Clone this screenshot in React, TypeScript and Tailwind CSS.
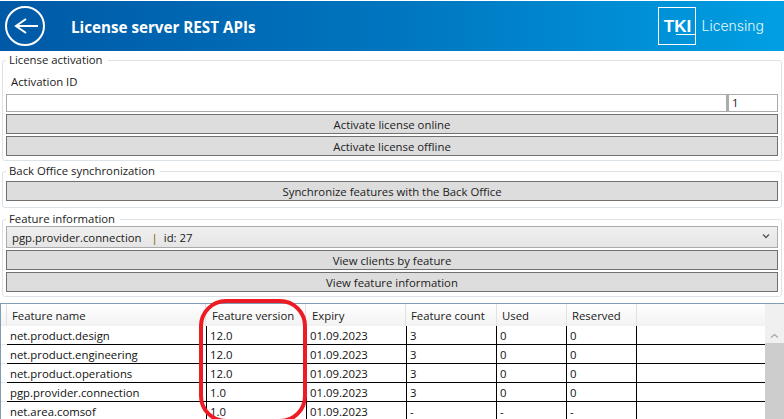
import React from "react";

const rows = [
  ["net.product.design", "12.0", "01.09.2023", "3", "0", "0"],
  ["net.product.engineering", "12.0", "01.09.2023", "3", "0", "0"],
  ["net.product.operations", "12.0", "01.09.2023", "3", "0", "0"],
  ["pgp.provider.connection", "1.0", "01.09.2023", "3", "0", "0"],
  ["net.area.comsof", "1.0", "01.09.2023", "-", "-", "-"],
];

const heads = [
  ["Feature name", "w-[199px] pl-[5px]"],
  ["Feature version", "w-[100px] pl-[6px]"],
  ["Expiry", "w-[100px] pl-[6px]"],
  ["Feature count", "w-[91px] pl-[5px]"],
  ["Used", "w-[70px] pl-[5px]"],
  ["Reserved", "w-[70px] pl-[5px]"],
];
const cellWidths = ["w-[199px]", "w-[100px]", "w-[100px]", "w-[90px]", "w-[70px]", "w-[70px]"];

function Btn({ children }: { children: React.ReactNode }) {
  return (
    <div className="h-5 border border-[#707070] bg-[#dddddd] flex items-center justify-center pt-[2px] text-[11.35px] leading-[14px] text-[#222]">
      {children}
    </div>
  );
}

function Group({ title, children, cls }: { title: string; children: React.ReactNode; cls: string }) {
  return (
    <fieldset className={`mx-[2px] border border-[#dce3e8] rounded-[3px] px-[3px] ${cls}`}>
      <legend className="ml-0 pl-[3px] pr-[5px] h-[14px] text-[11.35px] leading-[13px] text-[#222]">{title}</legend>
      {children}
    </fieldset>
  );
}

export default function App() {
  return (
    <div className="relative w-[784px] h-[419px] overflow-hidden bg-white text-[#1a1a1a] font-['Open_Sans','Noto_Sans',sans-serif]">
      <div className="h-[50px] mt-px flex items-center bg-gradient-to-r from-[#0059a6] via-[#0075bf] to-[#009fe3]">
        <svg width="42" height="42" viewBox="0 0 42 42" className="ml-[4px] shrink-0" fill="none" stroke="white">
          <circle cx="21" cy="21" r="19" strokeWidth="2" />
          <path d="M34 21H12M22 14l-10 7 10 7" strokeWidth="2" />
        </svg>
        <div className="ml-[25px] mt-[3px] text-[15.2px] font-bold text-white leading-none">License server REST APIs</div>
        <div className="ml-auto mr-[20px] flex items-center">
          <div className="relative w-[38px] h-[38px] border border-white flex items-center justify-center">
            <span className="text-[17px] font-bold text-white leading-none font-['Liberation_Sans',sans-serif]">TKI</span>
            <div className="absolute left-[17px] right-0 bottom-[9px] h-px bg-white" />
          </div>
          <div className="ml-[5px] text-[14px] text-[#e8f7fd] font-['Inter',sans-serif] font-light leading-none">Licensing</div>
        </div>
      </div>

      <Group title="License activation" cls="mt-[2px] h-[108px]">
        <div className="ml-[5px] mt-[6px] h-[17px] text-[11.35px] leading-[17px]">Activation ID</div>
        <div className="mt-[4px] flex h-[18px]">
          <div className="flex-1 border border-[#ababab] bg-white" />
          <div className="w-[51px] border border-[#ababab] border-l-[2px] bg-white text-[11.35px] leading-[16px] pl-[3px]">1</div>
        </div>
        <div className="mt-[2px] flex flex-col gap-[2px]">
          <Btn>Activate license online</Btn>
          <Btn>Activate license offline</Btn>
        </div>
      </Group>

      <Group title="Back Office synchronization" cls="mt-[3px] h-[44px]">
        <div className="mt-[3px]">
          <Btn>Synchronize features with the Back Office</Btn>
        </div>
      </Group>

      <Group title="Feature information" cls="mt-[4px] h-[85px]">
        <div className="h-[22px] border border-[#ababab] bg-gradient-to-b from-[#f0f0f0] to-[#e5e5e5] flex items-center pl-[5px] pr-[7px] pt-[2px] text-[11.35px] leading-[14px]">
          <span>pgp.provider.connection</span>
          <span className="ml-[10px] text-[#7a5a00]">|</span>
          <span className="ml-[6px]">id: 27</span>
          <svg width="8" height="6" viewBox="0 0 8 6" className="ml-auto -mt-[4px]" fill="none" stroke="#555" strokeWidth="1.3">
            <path d="M1 1.5l3 3 3-3" />
          </svg>
        </div>
        <div className="mt-[2px] flex flex-col gap-[2px]">
          <Btn>View clients by feature</Btn>
          <Btn>View feature information</Btn>
        </div>
      </Group>

      <div className="mt-[6px] border-t border-l border-[#7f9db9] bg-white">
        <div className="flex h-[22px] bg-gradient-to-b from-white to-[#f2f2f2]">
          <div className="w-[6px] border-r border-[#e2e2e2]" />
          {heads.map(([t, c]) => (
            <div key={t} className={`${c} border-r border-[#e2e2e2] text-[11.35px] leading-[23px]`}>{t}</div>
          ))}
        </div>
        <div className="relative">
          {rows.map((r) => (
            <div key={r[0]} className="flex h-[19px]">
              <div className="w-[6px] border-b border-[#e8e8e8]" />
              <div className="flex border-b border-black">
                {r.map((v, i) => (
                  <div key={i} className={`${cellWidths[i]} ${i === 0 ? "pl-[3px]" : "pl-[3px] border-l border-black"} text-[11.35px] leading-[19px] text-[#111]`}>{v}</div>
                ))}
                <div className="w-[129px] border-l border-black" />
              </div>
            </div>
          ))}
          <div className="absolute right-0 -top-[22px] w-[19px] h-[140px] bg-[#f0f0f0]">
            <div className="h-[39px] flex items-center justify-center pt-[24px]">
              <svg width="9" height="6" viewBox="0 0 9 6" fill="none" stroke="#a8a8a8" strokeWidth="1.3">
                <path d="M1 4.5l3.5-3 3.5 3" />
              </svg>
            </div>
            <div className="h-[101px] bg-[#cdcdcd]" />
          </div>
        </div>
      </div>

      <svg width="110" height="130" viewBox="0 0 110 130" className="absolute left-[198px] top-[298px]" fill="none">
        <rect x="3" y="3" width="104" height="120" rx="25" stroke="#ed1c24" strokeWidth="4" />
      </svg>
    </div>
  );
}
